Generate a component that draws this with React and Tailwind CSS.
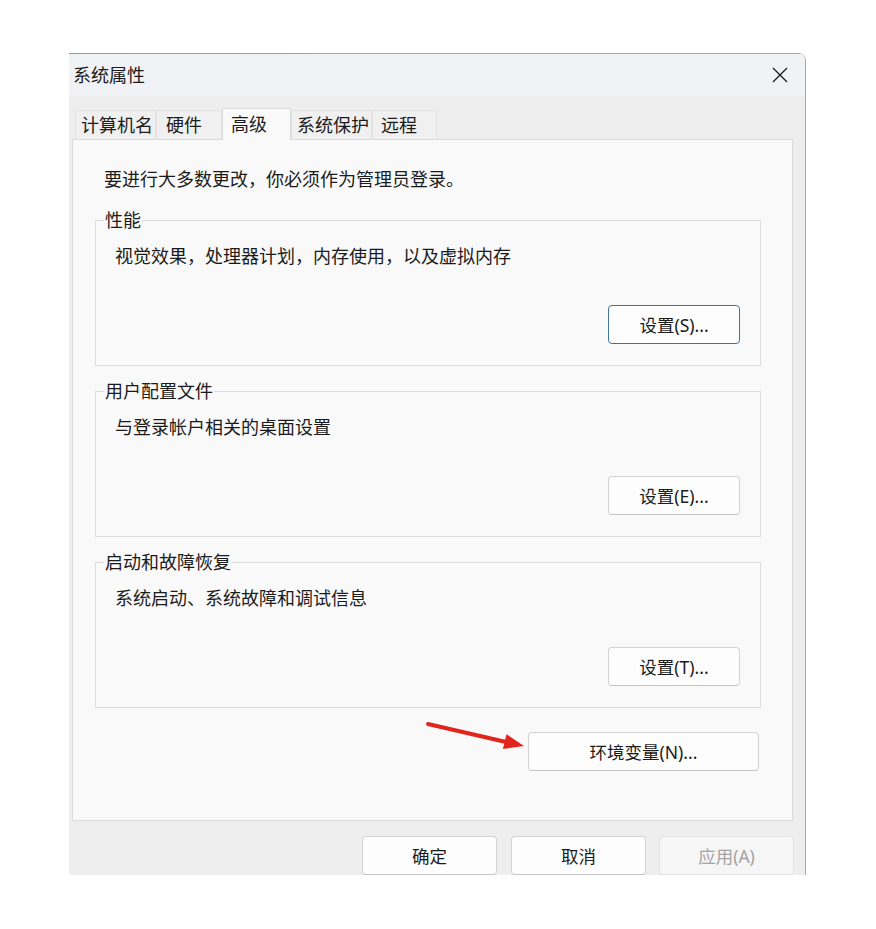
import React from 'react';

const tabs = [
  { label: '计算机名', w: 'w-[81px]', pl: 'pl-[5px]' },
  { label: '硬件', w: 'w-[66px]', pl: 'pl-[9px]' },
  { label: '高级', w: 'w-[69px]', pl: 'pl-[8px]', active: true },
  { label: '系统保护', w: 'w-[81px]', pl: 'pl-[5px]' },
  { label: '远程', w: 'w-[65px]', pl: 'pl-[8px]' },
];

const groups = [
  { title: '性能', desc: '视觉效果，处理器计划，内存使用，以及虚拟内存', button: '设置(S)...', primary: true },
  { title: '用户配置文件', desc: '与登录帐户相关的桌面设置', button: '设置(E)...' },
  { title: '启动和故障恢复', desc: '系统启动、系统故障和调试信息', button: '设置(T)...' },
];

const Button = ({ children, className = '', primary, disabled }) => (
  <button
    className={`flex h-[39px] items-center justify-center rounded-[4px] border text-[17.5px] leading-6 ${
      disabled
        ? 'border-[#e3e3e3] bg-[#f6f6f6] text-[#a3a3a3]'
        : primary
        ? 'border-[#43729a] bg-[#fdfdfd] text-[#1b1b1b]'
        : 'border-[#d3d3d3] border-b-[#c4c4c4] bg-[#fdfdfd] text-[#1b1b1b]'
    } ${className}`}
  >
    {children}
  </button>
);

const GroupBox = ({ title, desc, button, primary }) => (
  <fieldset className="border border-[#dcdcdc]">
    <legend className="ml-[8px] px-[1px] text-[18px] leading-6 text-[#1b1b1b]">{title}</legend>
    <div className="flex flex-col pl-[19px] pr-[20px] pt-[12px] pb-[21px]">
      <p className="text-[18px] leading-6 text-[#1b1b1b]">{desc}</p>
      <div className="mt-[37px] flex justify-end">
        <Button primary={primary} className="w-[132px]">{button}</Button>
      </div>
    </div>
  </fieldset>
);

export default function App() {
  return (
    <div className="min-h-[929px] bg-white pl-[69px] pt-[53px] font-['Noto_Sans','Noto_Sans_CJK_SC',sans-serif]">
      <div className="relative flex h-[822px] w-[737px] flex-col overflow-hidden rounded-tr-[8px] border-r border-[#a9a9a9] bg-[#eeeeee]">
        {/* accent edge along the top of the window */}
        <div className="h-[1px] bg-[linear-gradient(to_right,#b3946a_0%,#c2a47c_52%,#a6a6a6_53%,#a6a6a6_100%)]" />

        {/* title bar */}
        <div className="flex h-[43px] items-center justify-between bg-[#f1f2f5] pl-[4px] pr-[17px]">
          <span className="text-[18px] leading-6 text-[#1b1b1b]">系统属性</span>
          <svg width="16" height="16" viewBox="0 0 16 16" className="text-[#1b1b1b]">
            <path d="M1 1 L15 15 M15 1 L1 15" stroke="currentColor" strokeWidth="1.3" />
          </svg>
        </div>

        <div className="flex flex-col pl-[3px] pr-[12px] pt-[12px]">
          {/* tab strip */}
          <div className="flex items-end pl-[3px]">
            {tabs.map((t) =>
              t.active ? (
                <div
                  key={t.label}
                  className={`relative z-10 mb-[-1px] flex h-[32px] items-center border border-b-0 border-[#d9d9d9] bg-[#f9f9f9] text-[18px] text-[#1b1b1b] ${t.w} ${t.pl}`}
                >
                  {t.label}
                </div>
              ) : (
                <div
                  key={t.label}
                  className={`flex h-[29px] items-center border border-b-0 border-[#e2e2e2] bg-[#f0f0f0] text-[18px] text-[#1b1b1b] ${t.w} ${t.pl}`}
                >
                  {t.label}
                </div>
              )
            )}
          </div>

          {/* tab page */}
          <div className="flex h-[682px] flex-col border border-[#dadada] bg-[#f9f9f9] pl-[22px] pr-[31px] pt-[27px]">
            <p className="pl-[9px] text-[18px] leading-6 text-[#1b1b1b]">要进行大多数更改，你必须作为管理员登录。</p>
            <div className="mt-[17px] flex flex-col gap-[13px]">
              {groups.map((g) => (
                <GroupBox key={g.title} {...g} />
              ))}
            </div>
            <div className="mt-[24px] flex justify-end pr-[2px]">
              <Button className="w-[231px]">环境变量(N)...</Button>
            </div>
          </div>

          {/* dialog buttons */}
          <div className="mr-[-1px] mt-[15px] flex justify-end">
            <Button className="w-[135px]">确定</Button>
            <Button className="ml-[14px] w-[135px]">取消</Button>
            <Button className="ml-[13px] w-[135px]" disabled>应用(A)</Button>
          </div>
        </div>

        {/* red pointer arrow */}
        <svg className="absolute left-[351px] top-[661px]" width="110" height="45" viewBox="0 0 110 45">
          <line x1="8" y1="10" x2="86" y2="28" stroke="#e0251c" strokeWidth="4" strokeLinecap="round" />
          <polygon points="104,32 82.9,35 86.5,20.2" fill="#e0251c" />
        </svg>
      </div>
    </div>
  );
}
